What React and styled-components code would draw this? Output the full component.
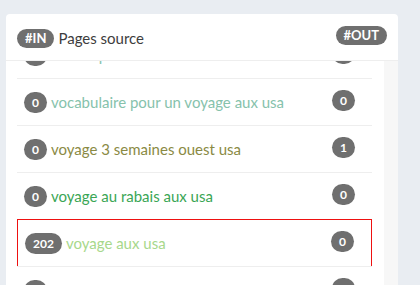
import React, { useEffect, useRef } from "react";
import styled, { createGlobalStyle } from "styled-components";

const Global = createGlobalStyle`
  html, body { margin: 0; padding: 0; background: #e9edf2; }
  body { font-family: Lato, "Open Sans", sans-serif; }
`;

const Page = styled.div`
  padding: 14px 22px 0 6px;
  height: 285px;
  box-sizing: border-box;
  overflow: hidden;
`;

const Card = styled.div`
  width: 392px;
  background: #fff;
  border-radius: 4px 4px 0 0;
  overflow: hidden;
`;

const Header = styled.div`
  display: flex;
  justify-content: space-between;
  align-items: flex-start;
  padding: 12px 11px 10px 11px;
  border-bottom: 1px solid #eeeeee;
`;

const Title = styled.div`
  display: flex;
  align-items: center;
  gap: 4px;
  height: 24px;
  font-size: 15px;
  color: #3d3d3d;
`;

const Pill = styled.span`
  display: inline-block;
  background: #6f6f6f;
  color: #fff;
  font-weight: 700;
  font-size: ${(p) => (p.$big ? "13px" : "12px")};
  line-height: 13px;
  padding: ${(p) => (p.$big ? "3px 8px" : "4px 8px")};
  border-radius: 11px;
  white-space: nowrap;
`;

const Body = styled.div`
  display: flex;
  height: 230px;
`;

const List = styled.div`
  flex: 1;
  overflow: hidden;
  padding: 0 12px 0 11px;
`;

const Track = styled.div`
  width: 14px;
  flex: none;
  background: #f7f7f7;
`;

const Row = styled.div`
  display: flex;
  align-items: center;
  height: 46px;
  padding: 0 17px 0 7px;
  border-top: 1px solid #eeeeee;
`;

const SelectedRow = styled(Row)`
  border: 1px solid #ee1111;
  border-bottom: 0;
`;

const InPill = styled(Pill)`
  margin-right: 4px;
`;

const Label = styled.span`
  flex: 1;
  font-size: 15px;
  color: ${(p) => p.$color};
  white-space: nowrap;
`;

const OutPill = styled(Pill)`
  align-self: flex-start;
  margin-top: 11px;
`;

const rows = [
  { in: 0, text: "road trip usa en famille", color: "#86c2ac", out: 0 },
  { in: 0, text: "vocabulaire pour un voyage aux usa", color: "#86c2ac", out: 0 },
  { in: 0, text: "voyage 3 semaines ouest usa", color: "#8a8a44", out: 1 },
  { in: 0, text: "voyage au rabais aux usa", color: "#3aa655", out: 0 },
  { in: 202, text: "voyage aux usa", color: "#a7d88b", out: 0, selected: true },
  { in: 0, text: "voyage en usa pas cher", color: "#6f9fbf", out: 0 },
  { in: 0, text: "voyage organisé usa", color: "#86c2ac", out: 0 },
];

export default function App() {
  const ref = useRef(null);
  useEffect(() => {
    if (ref.current) ref.current.scrollTop = 30;
  }, []);
  return (
    <>
      <Global />
      <Page>
        <Card>
          <Header>
            <Title>
              <Pill $big>#IN</Pill>
              <span>Pages source</span>
            </Title>
            <Pill $big>#OUT</Pill>
          </Header>
          <Body>
            <List ref={ref}>
              {rows.map((r, i) => {
                const R = r.selected ? SelectedRow : Row;
                return (
                  <R key={i}>
                    <InPill>{r.in}</InPill>
                    <Label $color={r.color}>{r.text}</Label>
                    <OutPill>{r.out}</OutPill>
                  </R>
                );
              })}
            </List>
            <Track />
          </Body>
        </Card>
      </Page>
    </>
  );
}
